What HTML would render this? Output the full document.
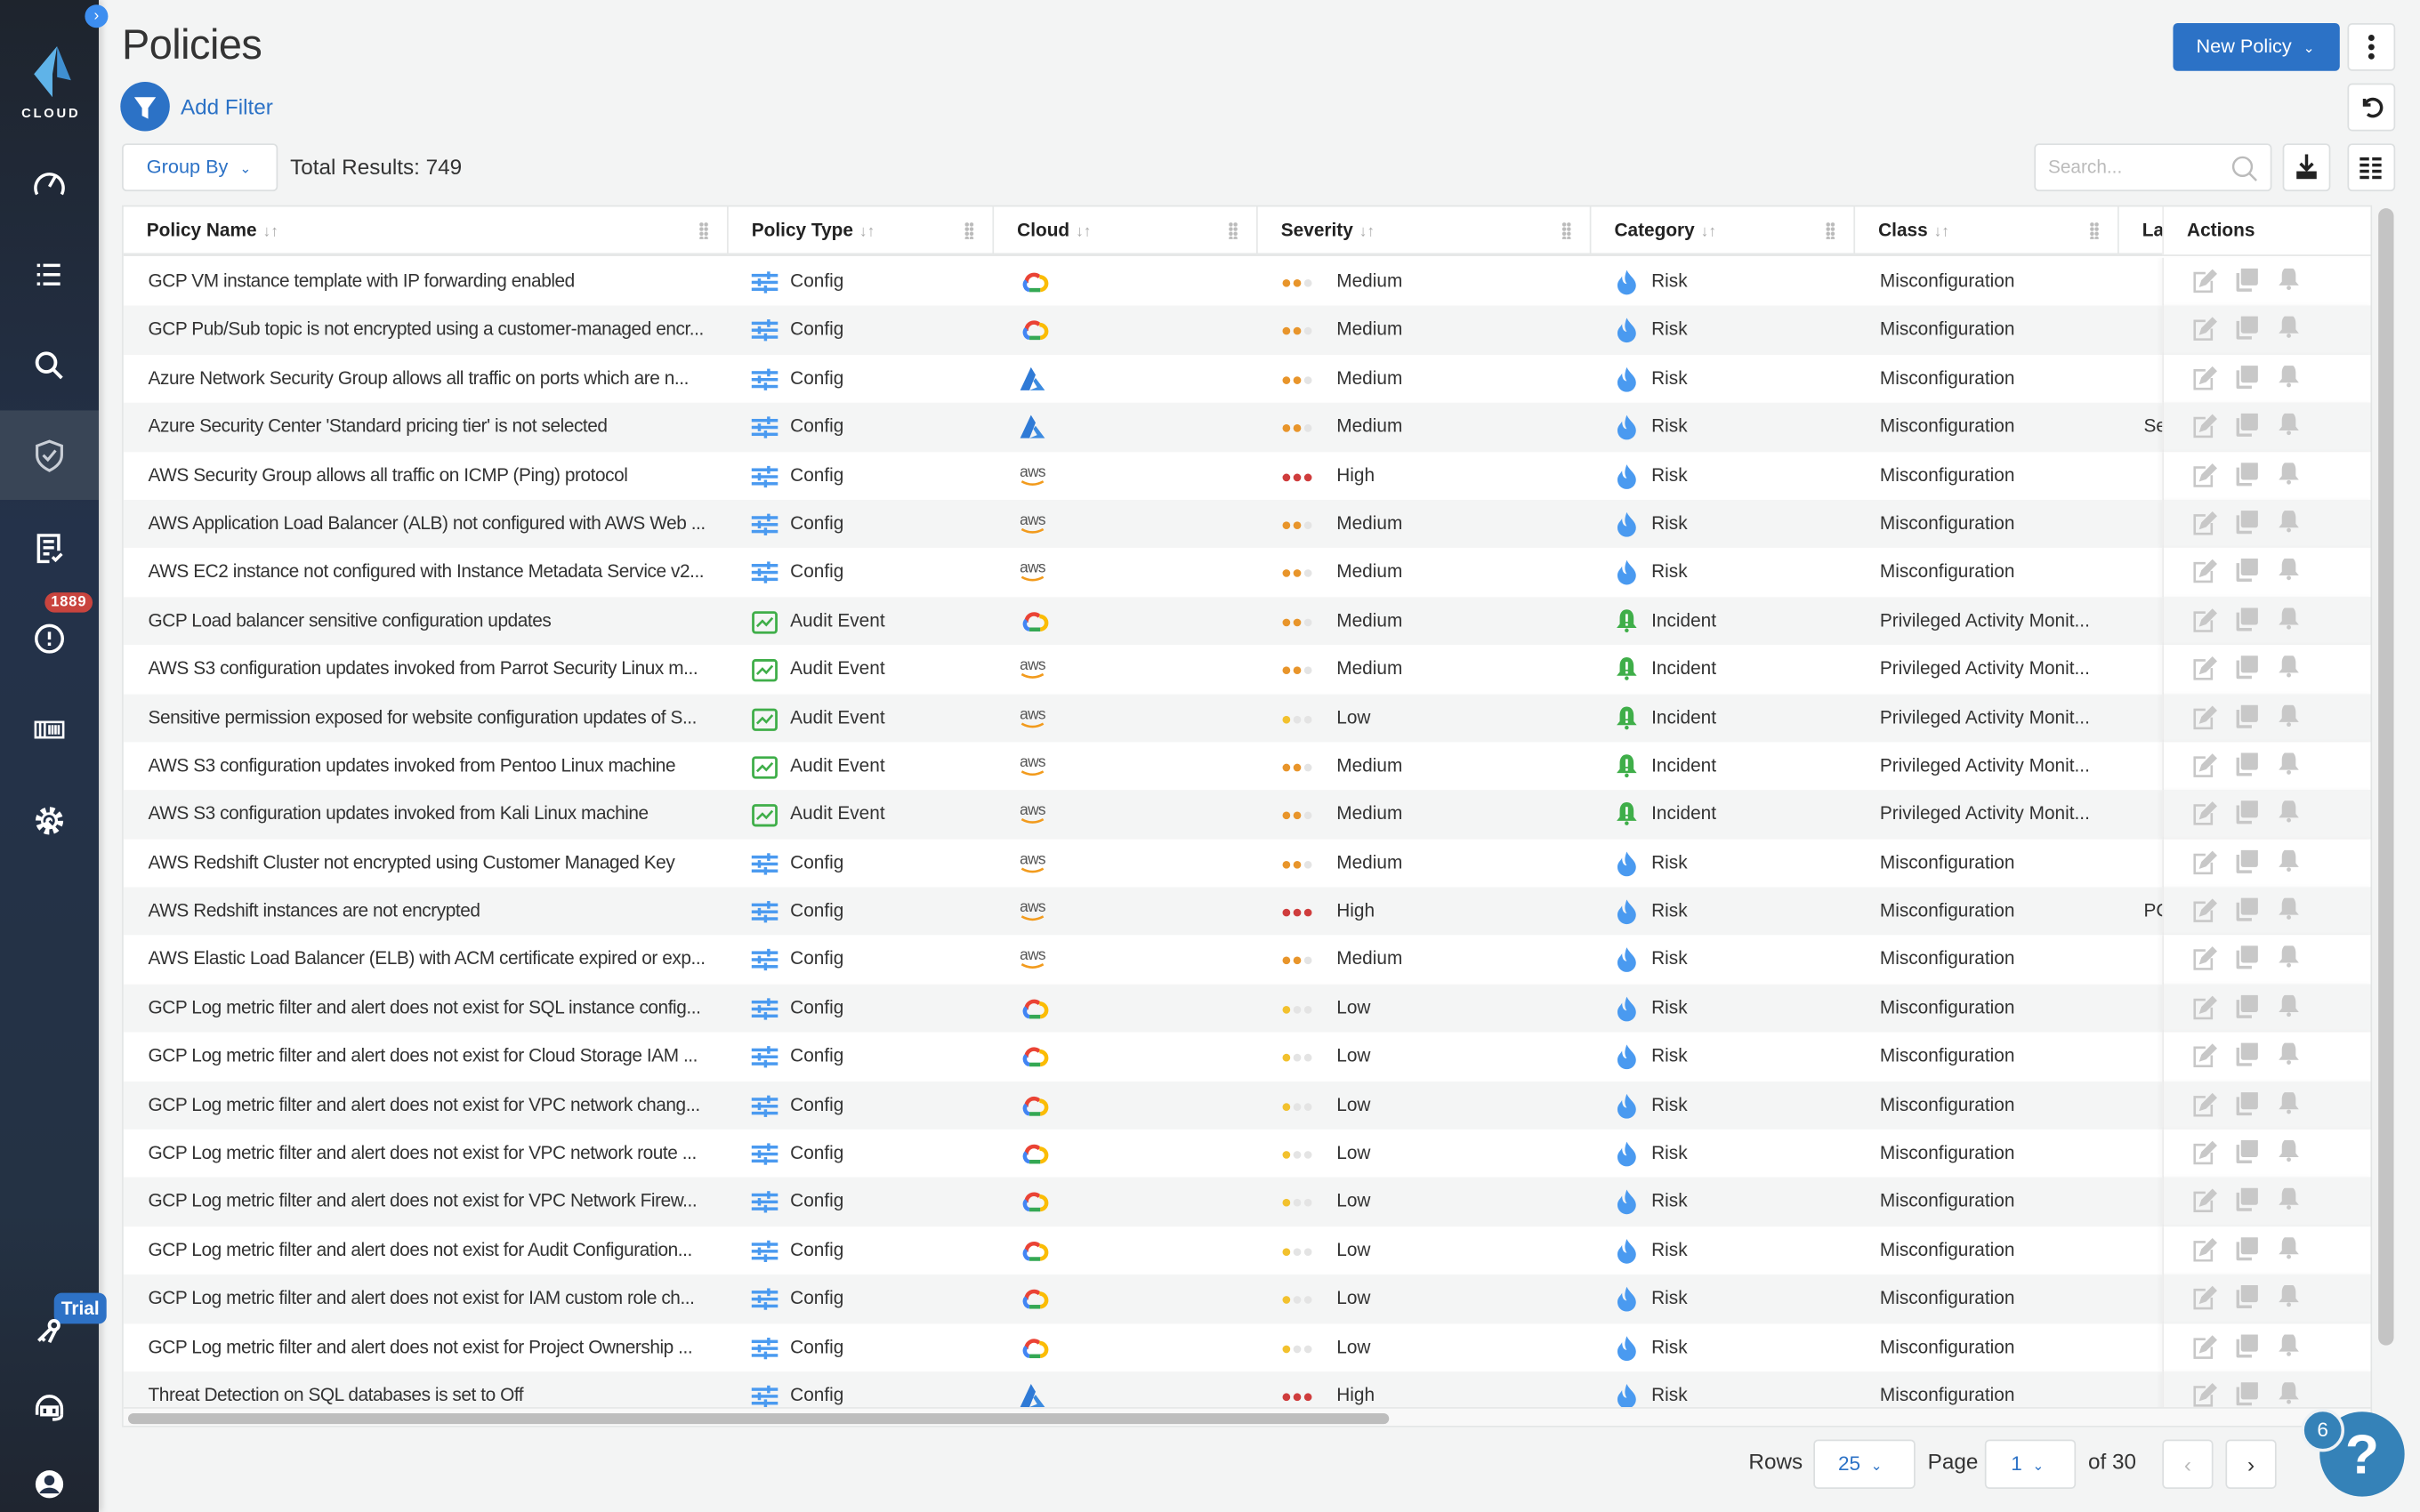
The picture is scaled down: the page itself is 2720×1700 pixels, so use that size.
<!DOCTYPE html>
<html><head><meta charset="utf-8">
<style>
*{box-sizing:border-box;margin:0;padding:0}
html,body{width:2720px;height:1700px;overflow:hidden;background:#f3f4f4}
#w{width:1568px;height:980px;transform:scale(1.734694);transform-origin:0 0;position:relative;font-family:"Liberation Sans",sans-serif;color:#333;background:#f3f4f4}
.sb{position:absolute;left:0;top:0;width:64px;height:980px;background:linear-gradient(#1e242d 0,#24324a 35%,#243244 80%,#1f2530 100%);box-shadow:2px 0 4px rgba(0,0,0,.15)}
.si{position:absolute;left:16px;width:32px;height:32px}
.abs{position:absolute}
.tbl{position:absolute;left:79px;top:133px;width:1458px;height:792px;background:#fff;border:1px solid #e3e5e5;overflow:hidden}
.hd{position:absolute;left:0;top:0;height:32px;width:1458px;border-bottom:2px solid #e6e8e8;font-weight:bold;font-size:12px;color:#222}
.hc{position:absolute;top:0;height:31px;line-height:31px;border-right:1px solid #e6e8e8;padding-left:15px}
.hc .so{color:#aaa;font-weight:normal;font-size:10px;margin-left:4px}
.hc .dr{position:absolute;right:12px;top:10px;width:6px;height:11px;background:radial-gradient(circle,#bbb 1.2px,transparent 1.4px) 0 0/3px 3px}
.body{position:absolute;left:0;top:33px;width:1458px;height:745px;overflow:hidden}
.r{height:31.4px;position:relative;font-size:12px;color:#333;white-space:nowrap}
.r:nth-child(even){background:#f4f5f5}
.r span{position:absolute;top:0;line-height:31px}
.r>svg{position:absolute;overflow:visible}
.n{left:16px;width:370px;overflow:hidden;letter-spacing:-.25px}
.ti{left:407px;top:9px;width:17px;height:14px}
.tt{left:432px}
.cl{left:579px;top:7px;width:20px;height:17px}
.sv{left:751px;top:14px;width:24px;height:5px}
.st{left:786px}
.ci{left:967px;top:7px;width:14px;height:16px}
.ct{left:990px}
.cs{left:1138px}
.la{left:1309px}
.act{position:absolute;left:1321px;top:0;width:137px;height:31.4px;background:inherit;border-left:1px solid #ececec;box-shadow:-2px 0 3px rgba(0,0,0,.03)}
.r:nth-child(odd) .act{background:#fff}
.act svg{position:absolute;top:7px;left:0}
.btn{position:absolute;background:#fff;border:1px solid #dcdfe0;border-radius:3px}
</style></head><body><div id="w">
<svg width="0" height="0" style="position:absolute">
<defs>
<g id="cfg" fill="#4a9af0"><rect x="0" y="1.5" width="17" height="2"/><rect x="0" y="6" width="17" height="2"/><rect x="0" y="10.5" width="17" height="2"/><rect x="10" y="0" width="2" height="5"/><rect x="4" y="4.5" width="2" height="5"/><rect x="8" y="9" width="2" height="5"/></g>
<g id="aud"><rect x="1" y="1" width="15" height="13" rx="1.5" fill="none" stroke="#3fae49" stroke-width="1.6"/><path d="M3.5 10 L7 6.5 L9.5 9 L13.5 4.5" fill="none" stroke="#3fae49" stroke-width="1.5"/></g>
<g id="gcp" fill="none" stroke-width="2.6"><path d="M6 9.5 A5 5 0 0 1 14.5 5.5" stroke="#ea4335"/><path d="M14.5 5.5 A4.2 4.2 0 0 1 15 14" stroke="#fbbc05"/><path d="M15 14 H8" stroke="#34a853"/><path d="M8 14 A3.6 3.6 0 0 1 6 8" stroke="#4285f4"/></g>
<g id="az"><path d="M9 1 L2 16 L8 16 L12 6Z" fill="#2f7ad6"/><path d="M12 8 L18 16 L8 16 L13 14 L10.5 10Z" fill="#3c8be0"/></g>
<g id="drop"><path d="M7 1 C9 5 13 7 13 11 A6 6 0 0 1 1 11 C1 8 3 7 4 5 C4 8 5 10 7 10 C5 7 6 4 7 1Z" fill="#4a9af0"/></g>
<g id="bl"><path d="M7 1 C10 1 11.5 3.5 11.5 6.5 L11.5 10.5 L13.5 13 L0.5 13 L2.5 10.5 L2.5 6.5 C2.5 3.5 4 1 7 1Z" fill="#3fae49"/><rect x="6.2" y="4" width="1.6" height="5" fill="#fff"/><rect x="6.2" y="10" width="1.6" height="1.6" fill="#fff"/><circle cx="7" cy="14.6" r="1.3" fill="#3fae49"/></g>
<g id="ed" fill="none" stroke="#c8c8c8" stroke-width="1.5"><path d="M9 3 H2 V15 H13 V8"/><path d="M6 11 L7 8 L13.5 1.5 L15.5 3.5 L9 10Z" fill="#c8c8c8"/></g>
<g id="cp" fill="#c8c8c8"><rect x="4" y="0" width="11" height="12" rx="1.5"/><path d="M1 4 H3 V14 H11 V16 H2 A1 1 0 0 1 1 15Z"/></g>
<g id="bell" fill="#c8c8c8"><path d="M7 1 C10 1 11.5 3.5 11.5 6.5 L11.5 10.5 L13.5 13 L0.5 13 L2.5 10.5 L2.5 6.5 C2.5 3.5 4 1 7 1Z"/><circle cx="7" cy="14.6" r="1.4"/></g>
<g id="aws"><text x="10" y="9" text-anchor="middle" font-family="Liberation Sans" font-size="10" fill="#555" letter-spacing="-.4">aws</text><path d="M3 12 Q10 16 17 12" stroke="#f29b1d" stroke-width="1.5" fill="none"/></g>
<g id="sM"><circle cx="2.5" cy="2.5" r="2.5" fill="#e8952b"/><circle cx="9.5" cy="2.5" r="2.5" fill="#e8952b"/><circle cx="16.5" cy="2.5" r="2.5" fill="#e4e4e4"/></g>
<g id="sH"><circle cx="2.5" cy="2.5" r="2.5" fill="#cf3d3d"/><circle cx="9.5" cy="2.5" r="2.5" fill="#cf3d3d"/><circle cx="16.5" cy="2.5" r="2.5" fill="#cf3d3d"/></g>
<g id="sL"><circle cx="2.5" cy="2.5" r="2.5" fill="#f2c12e"/><circle cx="9.5" cy="2.5" r="2.5" fill="#e4e4e4"/><circle cx="16.5" cy="2.5" r="2.5" fill="#e4e4e4"/></g>
<g id="acts"><use href="#ed" x="18"/><use href="#cp" x="46" y="-1"/><use href="#bell" x="74" y="-2"/></g>
</defs></svg>

<!-- sidebar -->
<div class="sb">
<div class="abs" style="left:55px;top:3px;width:15px;height:15px;border-radius:50%;background:#3d8ef0;color:#fff;font-size:10px;line-height:15px;text-align:center">›</div>
<svg class="abs" style="left:20px;top:30px" width="28" height="36"><path d="M17 0 L2 18 L14 33 L14 18Z" fill="#5fb3e8"/><path d="M17 0 L17 20 L26 22Z" fill="#3f8fd0"/></svg>
<div class="abs" style="left:0;top:68px;width:66px;text-align:center;color:#fff;font-size:8.5px;font-weight:bold;letter-spacing:1.6px">CLOUD</div>
<svg class="si" style="top:104px" viewBox="0 0 32 32" fill="none" stroke="#fff" stroke-width="2"><path d="M8 22 A9 9 0 1 1 24 22"/><path d="M16 17 L20 10"/></svg>
<svg class="si" style="top:162px" viewBox="0 0 32 32" fill="#fff"><rect x="12" y="9" width="11" height="2"/><rect x="12" y="15" width="11" height="2"/><rect x="12" y="21" width="11" height="2"/><rect x="8" y="9" width="2" height="2"/><rect x="8" y="15" width="2" height="2"/><rect x="8" y="21" width="2" height="2"/></svg>
<svg class="si" style="top:221px" viewBox="0 0 32 32" fill="none" stroke="#fff" stroke-width="2.2"><circle cx="14" cy="14" r="6"/><path d="M18.5 18.5 L24 24"/></svg>
<div class="abs" style="left:0;top:266px;width:64px;height:58px;background:#394556"></div>
<svg class="si" style="top:279px" viewBox="0 0 32 32" fill="none" stroke="#c9ced6" stroke-width="1.8"><path d="M16 7 L24 10 V16 C24 21 20 24 16 26 C12 24 8 21 8 16 V10Z"/><path d="M12 16 L15 19 L20 13"/></svg>
<svg class="si" style="top:339px" viewBox="0 0 32 32" fill="none" stroke="#fff" stroke-width="2"><path d="M22 18 V8 H9 V25 H16"/><path d="M12 12 H19 M12 16 H19 M12 20 H16"/><path d="M18 22 L20 24 L24 20"/></svg>
<div class="abs" style="left:29px;top:384px;background:#c9443e;color:#fff;font-size:9.5px;font-weight:bold;border-radius:7px;padding:1px 4px;letter-spacing:.5px">1889</div>
<svg class="si" style="top:398px" viewBox="0 0 32 32" fill="none" stroke="#fff" stroke-width="2"><circle cx="16" cy="16" r="8.5"/><path d="M16 11.5 V16.5 M16 18.5 V20.5"/></svg>
<svg class="si" style="top:457px" viewBox="0 0 32 32" fill="none" stroke="#fff" stroke-width="1.5"><rect x="7" y="11" width="18" height="10"/><path d="M10 11 V21 M13 11 V21 M16 13 V19 M18 13 V19 M20 13 V19 M22 13 V19"/></svg>
<svg class="si" style="top:516px" viewBox="0 0 32 32"><circle cx="16" cy="16" r="7" fill="none" stroke="#fff" stroke-width="4" stroke-dasharray="3 2.5"/><circle cx="16" cy="16" r="5.5" fill="#fff"/><path d="M13 17 A3 3 0 1 1 18 18 L16 16" stroke="#24324a" stroke-width="1.6" fill="none"/></svg>
<div class="abs" style="left:35px;top:838px;width:34px;height:20px;background:#2e72c6;color:#fff;font-size:12px;font-weight:bold;line-height:20px;text-align:center;border-radius:5px">Trial</div>
<svg class="si" style="top:847px" viewBox="0 0 32 32" fill="none" stroke="#fff" stroke-width="2.2"><circle cx="19" cy="12" r="3"/><path d="M17 14 L9 22 M11 20 L13 22 M20 15 L16 23"/></svg>
<svg class="si" style="top:897px" viewBox="0 0 32 32" fill="none" stroke="#fff" stroke-width="2"><path d="M8 20 V16 A8 8 0 0 1 24 16 V20"/><rect x="11" y="15" width="4" height="5"/><rect x="17" y="15" width="4" height="5"/><path d="M24 20 Q24 23 18 23"/></svg>
<svg class="si" style="top:946px" viewBox="0 0 32 32"><circle cx="16" cy="16" r="9" fill="#fff"/><circle cx="16" cy="13.5" r="3.3" fill="#24324a"/><path d="M9.5 22 A7 6 0 0 1 22.5 22" fill="#24324a"/></svg>
</div>

<!-- header -->
<div class="abs" style="left:79px;top:14px;font-size:27px;color:#333;letter-spacing:-.3px">Policies</div>
<div class="abs" style="left:78px;top:53px;width:32px;height:32px;border-radius:50%;background:#2c72c6"><svg width="32" height="32"><path d="M9 10 H23 L18 17 V24 L14 22 V17Z" fill="#fff"/></svg></div>
<div class="abs" style="left:117px;top:61px;font-size:14px;color:#2c72c6">Add Filter</div>
<div class="btn" style="left:79px;top:93px;width:101px;height:31px;font-size:12.5px;color:#2c72c6;line-height:29px;padding-left:15px">Group By <span style="font-size:9px;margin-left:4px">&#8964;</span></div>
<div class="abs" style="left:188px;top:100px;font-size:14px;color:#333">Total Results: 749</div>
<div class="abs" style="left:1408px;top:15px;width:108px;height:31px;background:#2c72c6;border-radius:3px;color:#fff;font-size:12.5px;line-height:31px;padding-left:15px">New Policy <span style="font-size:9px;margin-left:4px">&#8964;</span></div>
<div class="btn" style="left:1521px;top:15px;width:31px;height:31px"><svg width="29" height="29"><circle cx="14.5" cy="8.5" r="2" fill="#222"/><circle cx="14.5" cy="14.5" r="2" fill="#222"/><circle cx="14.5" cy="20.5" r="2" fill="#222"/></svg></div>
<div class="btn" style="left:1521px;top:54px;width:31px;height:31px"><svg width="29" height="29" fill="none" stroke="#222" stroke-width="2"><path d="M10 9 V13 H14"/><path d="M10.5 12.5 A5.5 5.5 0 1 1 12 19"/></svg></div>
<div class="btn" style="left:1318px;top:93px;width:154px;height:31px;font-size:12px;color:#bbb;line-height:29px;padding-left:8px">Search...<svg style="position:absolute;right:8px;top:6px" width="18" height="18" fill="none" stroke="#bbb" stroke-width="1.4"><circle cx="8" cy="8" r="6"/><path d="M12.5 12.5 L17 17"/></svg></div>
<div class="btn" style="left:1479px;top:93px;width:31px;height:31px"><svg width="29" height="29"><path d="M14.5 6 V16 M10.5 12 L14.5 16 L18.5 12" stroke="#222" stroke-width="2" fill="none"/><rect x="8" y="17" width="13" height="5" fill="#222"/></svg></div>
<div class="btn" style="left:1521px;top:93px;width:31px;height:31px"><svg width="29" height="29" fill="#222"><rect x="7" y="8" width="6" height="2"/><rect x="15" y="8" width="6" height="2"/><rect x="7" y="12" width="6" height="2"/><rect x="15" y="12" width="6" height="2"/><rect x="7" y="16" width="6" height="2"/><rect x="15" y="16" width="6" height="2"/><rect x="7" y="20" width="6" height="2"/><rect x="15" y="20" width="6" height="2"/></svg></div>

<!-- table -->
<div class="tbl">
<div class="hd">
<div class="hc" style="left:0;width:392px">Policy Name<span class="so">↓↑</span><i class="dr"></i></div>
<div class="hc" style="left:392px;width:172px">Policy Type<span class="so">↓↑</span><i class="dr"></i></div>
<div class="hc" style="left:564px;width:171px">Cloud<span class="so">↓↑</span><i class="dr"></i></div>
<div class="hc" style="left:735px;width:216px">Severity<span class="so">↓↑</span><i class="dr"></i></div>
<div class="hc" style="left:951px;width:171px">Category<span class="so">↓↑</span><i class="dr"></i></div>
<div class="hc" style="left:1122px;width:171px">Class<span class="so">↓↑</span><i class="dr"></i></div>
<div class="hc" style="left:1293px;width:40px">La</div>
<div class="hc" style="left:1321px;width:137px;background:#fff;border-left:1px solid #ececec;border-right:none">Actions</div>
</div>
<div class="body">
<div class="r"><span class="n">GCP VM instance template with IP forwarding enabled</span><svg class="ti"><use href="#cfg"/></svg><span class="tt">Config</span><svg class="cl"><use href="#gcp"/></svg><svg class="sv"><use href="#sM"/></svg><span class="st">Medium</span><svg class="ci"><use href="#drop"/></svg><span class="ct">Risk</span><span class="cs">Misconfiguration</span><div class="act"><svg width="120" height="18"><use href="#acts"/></svg></div></div>
<div class="r"><span class="n">GCP Pub/Sub topic is not encrypted using a customer-managed encr...</span><svg class="ti"><use href="#cfg"/></svg><span class="tt">Config</span><svg class="cl"><use href="#gcp"/></svg><svg class="sv"><use href="#sM"/></svg><span class="st">Medium</span><svg class="ci"><use href="#drop"/></svg><span class="ct">Risk</span><span class="cs">Misconfiguration</span><div class="act"><svg width="120" height="18"><use href="#acts"/></svg></div></div>
<div class="r"><span class="n">Azure Network Security Group allows all traffic on ports which are n...</span><svg class="ti"><use href="#cfg"/></svg><span class="tt">Config</span><svg class="cl"><use href="#az"/></svg><svg class="sv"><use href="#sM"/></svg><span class="st">Medium</span><svg class="ci"><use href="#drop"/></svg><span class="ct">Risk</span><span class="cs">Misconfiguration</span><div class="act"><svg width="120" height="18"><use href="#acts"/></svg></div></div>
<div class="r"><span class="n">Azure Security Center 'Standard pricing tier' is not selected</span><svg class="ti"><use href="#cfg"/></svg><span class="tt">Config</span><svg class="cl"><use href="#az"/></svg><svg class="sv"><use href="#sM"/></svg><span class="st">Medium</span><svg class="ci"><use href="#drop"/></svg><span class="ct">Risk</span><span class="cs">Misconfiguration</span><span class="la">Se</span><div class="act"><svg width="120" height="18"><use href="#acts"/></svg></div></div>
<div class="r"><span class="n">AWS Security Group allows all traffic on ICMP (Ping) protocol</span><svg class="ti"><use href="#cfg"/></svg><span class="tt">Config</span><svg class="cl"><use href="#aws"/></svg><svg class="sv"><use href="#sH"/></svg><span class="st">High</span><svg class="ci"><use href="#drop"/></svg><span class="ct">Risk</span><span class="cs">Misconfiguration</span><div class="act"><svg width="120" height="18"><use href="#acts"/></svg></div></div>
<div class="r"><span class="n">AWS Application Load Balancer (ALB) not configured with AWS Web ...</span><svg class="ti"><use href="#cfg"/></svg><span class="tt">Config</span><svg class="cl"><use href="#aws"/></svg><svg class="sv"><use href="#sM"/></svg><span class="st">Medium</span><svg class="ci"><use href="#drop"/></svg><span class="ct">Risk</span><span class="cs">Misconfiguration</span><div class="act"><svg width="120" height="18"><use href="#acts"/></svg></div></div>
<div class="r"><span class="n">AWS EC2 instance not configured with Instance Metadata Service v2...</span><svg class="ti"><use href="#cfg"/></svg><span class="tt">Config</span><svg class="cl"><use href="#aws"/></svg><svg class="sv"><use href="#sM"/></svg><span class="st">Medium</span><svg class="ci"><use href="#drop"/></svg><span class="ct">Risk</span><span class="cs">Misconfiguration</span><div class="act"><svg width="120" height="18"><use href="#acts"/></svg></div></div>
<div class="r"><span class="n">GCP Load balancer sensitive configuration updates</span><svg class="ti"><use href="#aud"/></svg><span class="tt">Audit Event</span><svg class="cl"><use href="#gcp"/></svg><svg class="sv"><use href="#sM"/></svg><span class="st">Medium</span><svg class="ci"><use href="#bl"/></svg><span class="ct">Incident</span><span class="cs">Privileged Activity Monit...</span><div class="act"><svg width="120" height="18"><use href="#acts"/></svg></div></div>
<div class="r"><span class="n">AWS S3 configuration updates invoked from Parrot Security Linux m...</span><svg class="ti"><use href="#aud"/></svg><span class="tt">Audit Event</span><svg class="cl"><use href="#aws"/></svg><svg class="sv"><use href="#sM"/></svg><span class="st">Medium</span><svg class="ci"><use href="#bl"/></svg><span class="ct">Incident</span><span class="cs">Privileged Activity Monit...</span><div class="act"><svg width="120" height="18"><use href="#acts"/></svg></div></div>
<div class="r"><span class="n">Sensitive permission exposed for website configuration updates of S...</span><svg class="ti"><use href="#aud"/></svg><span class="tt">Audit Event</span><svg class="cl"><use href="#aws"/></svg><svg class="sv"><use href="#sL"/></svg><span class="st">Low</span><svg class="ci"><use href="#bl"/></svg><span class="ct">Incident</span><span class="cs">Privileged Activity Monit...</span><div class="act"><svg width="120" height="18"><use href="#acts"/></svg></div></div>
<div class="r"><span class="n">AWS S3 configuration updates invoked from Pentoo Linux machine</span><svg class="ti"><use href="#aud"/></svg><span class="tt">Audit Event</span><svg class="cl"><use href="#aws"/></svg><svg class="sv"><use href="#sM"/></svg><span class="st">Medium</span><svg class="ci"><use href="#bl"/></svg><span class="ct">Incident</span><span class="cs">Privileged Activity Monit...</span><div class="act"><svg width="120" height="18"><use href="#acts"/></svg></div></div>
<div class="r"><span class="n">AWS S3 configuration updates invoked from Kali Linux machine</span><svg class="ti"><use href="#aud"/></svg><span class="tt">Audit Event</span><svg class="cl"><use href="#aws"/></svg><svg class="sv"><use href="#sM"/></svg><span class="st">Medium</span><svg class="ci"><use href="#bl"/></svg><span class="ct">Incident</span><span class="cs">Privileged Activity Monit...</span><div class="act"><svg width="120" height="18"><use href="#acts"/></svg></div></div>
<div class="r"><span class="n">AWS Redshift Cluster not encrypted using Customer Managed Key</span><svg class="ti"><use href="#cfg"/></svg><span class="tt">Config</span><svg class="cl"><use href="#aws"/></svg><svg class="sv"><use href="#sM"/></svg><span class="st">Medium</span><svg class="ci"><use href="#drop"/></svg><span class="ct">Risk</span><span class="cs">Misconfiguration</span><div class="act"><svg width="120" height="18"><use href="#acts"/></svg></div></div>
<div class="r"><span class="n">AWS Redshift instances are not encrypted</span><svg class="ti"><use href="#cfg"/></svg><span class="tt">Config</span><svg class="cl"><use href="#aws"/></svg><svg class="sv"><use href="#sH"/></svg><span class="st">High</span><svg class="ci"><use href="#drop"/></svg><span class="ct">Risk</span><span class="cs">Misconfiguration</span><span class="la">PC</span><div class="act"><svg width="120" height="18"><use href="#acts"/></svg></div></div>
<div class="r"><span class="n">AWS Elastic Load Balancer (ELB) with ACM certificate expired or exp...</span><svg class="ti"><use href="#cfg"/></svg><span class="tt">Config</span><svg class="cl"><use href="#aws"/></svg><svg class="sv"><use href="#sM"/></svg><span class="st">Medium</span><svg class="ci"><use href="#drop"/></svg><span class="ct">Risk</span><span class="cs">Misconfiguration</span><div class="act"><svg width="120" height="18"><use href="#acts"/></svg></div></div>
<div class="r"><span class="n">GCP Log metric filter and alert does not exist for SQL instance config...</span><svg class="ti"><use href="#cfg"/></svg><span class="tt">Config</span><svg class="cl"><use href="#gcp"/></svg><svg class="sv"><use href="#sL"/></svg><span class="st">Low</span><svg class="ci"><use href="#drop"/></svg><span class="ct">Risk</span><span class="cs">Misconfiguration</span><div class="act"><svg width="120" height="18"><use href="#acts"/></svg></div></div>
<div class="r"><span class="n">GCP Log metric filter and alert does not exist for Cloud Storage IAM ...</span><svg class="ti"><use href="#cfg"/></svg><span class="tt">Config</span><svg class="cl"><use href="#gcp"/></svg><svg class="sv"><use href="#sL"/></svg><span class="st">Low</span><svg class="ci"><use href="#drop"/></svg><span class="ct">Risk</span><span class="cs">Misconfiguration</span><div class="act"><svg width="120" height="18"><use href="#acts"/></svg></div></div>
<div class="r"><span class="n">GCP Log metric filter and alert does not exist for VPC network chang...</span><svg class="ti"><use href="#cfg"/></svg><span class="tt">Config</span><svg class="cl"><use href="#gcp"/></svg><svg class="sv"><use href="#sL"/></svg><span class="st">Low</span><svg class="ci"><use href="#drop"/></svg><span class="ct">Risk</span><span class="cs">Misconfiguration</span><div class="act"><svg width="120" height="18"><use href="#acts"/></svg></div></div>
<div class="r"><span class="n">GCP Log metric filter and alert does not exist for VPC network route ...</span><svg class="ti"><use href="#cfg"/></svg><span class="tt">Config</span><svg class="cl"><use href="#gcp"/></svg><svg class="sv"><use href="#sL"/></svg><span class="st">Low</span><svg class="ci"><use href="#drop"/></svg><span class="ct">Risk</span><span class="cs">Misconfiguration</span><div class="act"><svg width="120" height="18"><use href="#acts"/></svg></div></div>
<div class="r"><span class="n">GCP Log metric filter and alert does not exist for VPC Network Firew...</span><svg class="ti"><use href="#cfg"/></svg><span class="tt">Config</span><svg class="cl"><use href="#gcp"/></svg><svg class="sv"><use href="#sL"/></svg><span class="st">Low</span><svg class="ci"><use href="#drop"/></svg><span class="ct">Risk</span><span class="cs">Misconfiguration</span><div class="act"><svg width="120" height="18"><use href="#acts"/></svg></div></div>
<div class="r"><span class="n">GCP Log metric filter and alert does not exist for Audit Configuration...</span><svg class="ti"><use href="#cfg"/></svg><span class="tt">Config</span><svg class="cl"><use href="#gcp"/></svg><svg class="sv"><use href="#sL"/></svg><span class="st">Low</span><svg class="ci"><use href="#drop"/></svg><span class="ct">Risk</span><span class="cs">Misconfiguration</span><div class="act"><svg width="120" height="18"><use href="#acts"/></svg></div></div>
<div class="r"><span class="n">GCP Log metric filter and alert does not exist for IAM custom role ch...</span><svg class="ti"><use href="#cfg"/></svg><span class="tt">Config</span><svg class="cl"><use href="#gcp"/></svg><svg class="sv"><use href="#sL"/></svg><span class="st">Low</span><svg class="ci"><use href="#drop"/></svg><span class="ct">Risk</span><span class="cs">Misconfiguration</span><div class="act"><svg width="120" height="18"><use href="#acts"/></svg></div></div>
<div class="r"><span class="n">GCP Log metric filter and alert does not exist for Project Ownership ...</span><svg class="ti"><use href="#cfg"/></svg><span class="tt">Config</span><svg class="cl"><use href="#gcp"/></svg><svg class="sv"><use href="#sL"/></svg><span class="st">Low</span><svg class="ci"><use href="#drop"/></svg><span class="ct">Risk</span><span class="cs">Misconfiguration</span><div class="act"><svg width="120" height="18"><use href="#acts"/></svg></div></div>
<div class="r"><span class="n">Threat Detection on SQL databases is set to Off</span><svg class="ti"><use href="#cfg"/></svg><span class="tt">Config</span><svg class="cl"><use href="#az"/></svg><svg class="sv"><use href="#sH"/></svg><span class="st">High</span><svg class="ci"><use href="#drop"/></svg><span class="ct">Risk</span><span class="cs">Misconfiguration</span><div class="act"><svg width="120" height="18"><use href="#acts"/></svg></div></div>
</div>
<div class="abs" style="left:0;top:778px;width:1458px;height:14px;background:#f8f8f8;border-top:1px solid #e6e8e8"><div style="position:absolute;left:3px;top:3px;width:817px;height:7px;border-radius:4px;background:#bdbdbd"></div></div>
</div>
<div class="abs" style="left:1541px;top:135px;width:10px;height:737px;border-radius:5px;background:#c4c4c4"></div>

<!-- pagination -->
<div class="abs" style="left:1133px;top:939px;font-size:14px;color:#333">Rows</div>
<div class="btn" style="left:1175px;top:933px;width:66px;height:32px;font-size:13px;color:#2c72c6;line-height:30px;padding-left:15px">25 <span style="font-size:9px;margin-left:3px">&#8964;</span></div>
<div class="abs" style="left:1249px;top:939px;font-size:14px;color:#333">Page</div>
<div class="btn" style="left:1286px;top:933px;width:59px;height:32px;font-size:13px;color:#2c72c6;line-height:30px;padding-left:16px">1 <span style="font-size:9px;margin-left:3px">&#8964;</span></div>
<div class="abs" style="left:1353px;top:939px;font-size:14px;color:#333">of 30</div>
<div class="btn" style="left:1401px;top:933px;width:33px;height:32px;color:#bbb;text-align:center;line-height:30px;font-size:14px">‹</div>
<div class="btn" style="left:1442px;top:933px;width:33px;height:32px;color:#333;text-align:center;line-height:30px;font-size:14px">›</div>
<div class="abs" style="left:1503px;top:915px;width:55px;height:55px;border-radius:50%;background:#3582b8;color:#fff;font-size:36px;font-weight:bold;text-align:center;line-height:55px">?</div>
<div class="abs" style="left:1491px;top:913px;width:28px;height:28px;border-radius:50%;background:#3582b8;border:2px solid #eef2f5;color:#fff;font-size:13px;text-align:center;line-height:24px">6</div>
</div></body></html>
